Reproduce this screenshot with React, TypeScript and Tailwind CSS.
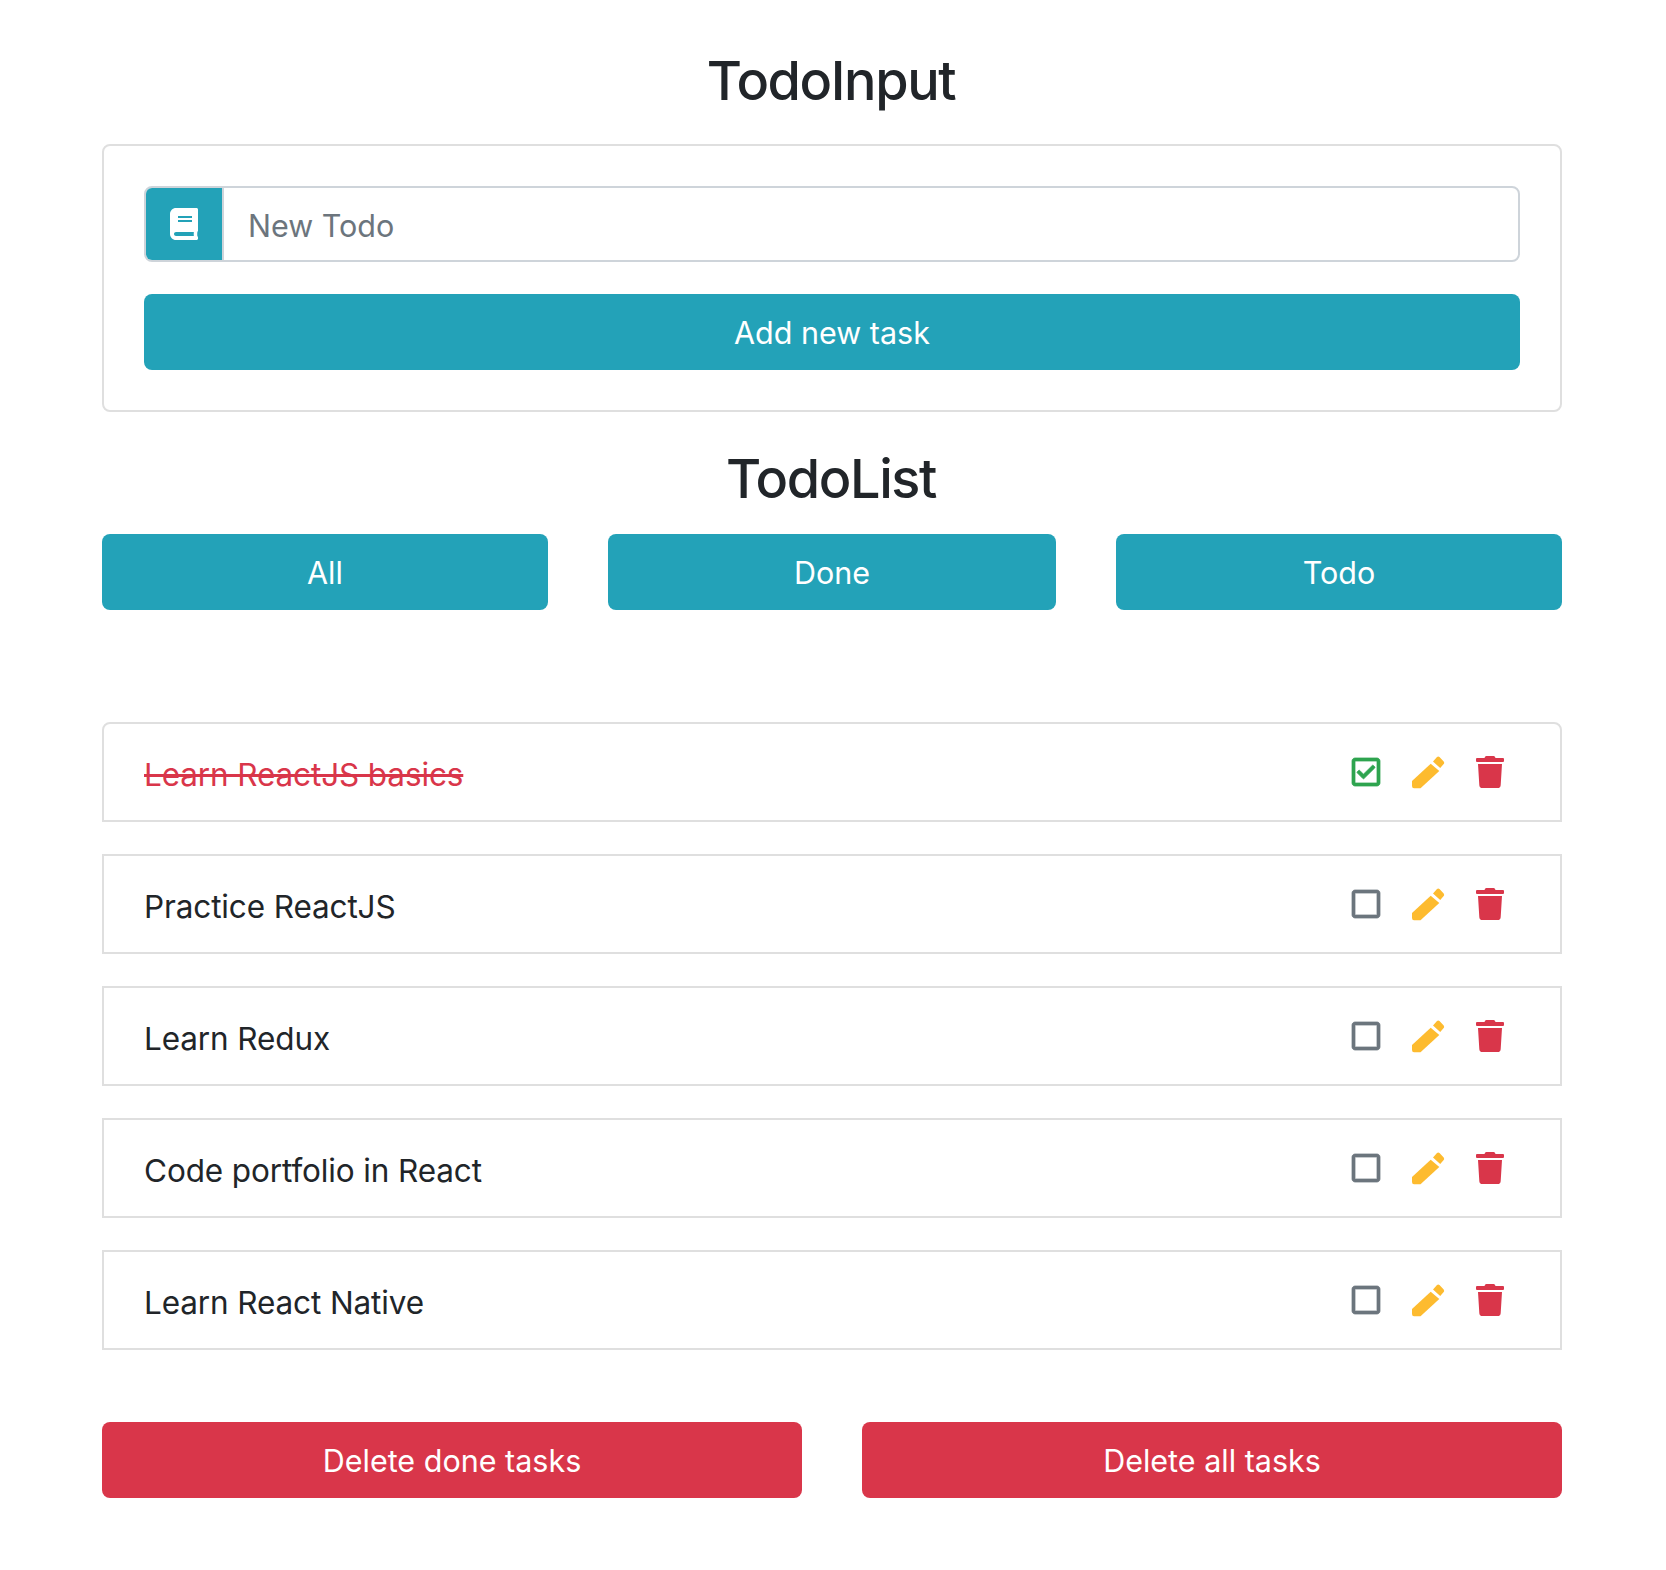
import { FaBook, FaRegCheckSquare, FaRegSquare, FaTrash } from "react-icons/fa";

const todos = [
  { text: "Learn ReactJS basics", done: true },
  { text: "Practice ReactJS", done: false },
  { text: "Learn Redux", done: false },
  { text: "Code portfolio in React", done: false },
  { text: "Learn React Native", done: false },
];

const btn = "h-[76px] rounded-lg pt-[2px] text-[30.5px] leading-[48px] font-normal tracking-normal text-white";

// solid pencil with one slit below the eraser
function PencilIcon() {
  return (
    <svg viewBox="0 0 33 33" className="ml-[32px] h-[33px] w-[33px] text-[#fdbb2f]" fill="currentColor">
      <path d="M18.7 7.7 27.3 15 8.5 32.2H2Q0 32.2 0 30V25Z" />
      <path d="M21 5.6 25 1Q26.2 0 27.5 1L31.7 5.5Q32.7 7 31.7 8L28.2 12Z" />
    </svg>
  );
}

function TodoRow({ text, done }: { text: string; done: boolean }) {
  return (
    <li className="flex h-[100px] items-center justify-between border-2 border-[#dfdfdf] pl-[40px] pr-[56px] first:rounded-t-lg">
      <span className={done ? "mt-[6px] text-[#d9364a] line-through" : "mt-[6px]"}>{text}</span>
      <div className="flex items-center">
        {done ? (
          <FaRegCheckSquare className="h-[32px] w-[28px] overflow-visible text-[#2ea44f]" stroke="currentColor" strokeWidth={12} />
        ) : (
          <FaRegSquare className="h-[32px] w-[28px] overflow-visible text-[#6c757d]" stroke="currentColor" strokeWidth={12} />
        )}
        <PencilIcon />
        <FaTrash className="ml-[31px] h-[32px] w-[28px] text-[#d9364a]" />
      </div>
    </li>
  );
}

export default function App() {
  return (
    <div className="min-h-[1570px] bg-white font-['Inter',sans-serif] text-[31.5px] leading-[48px] font-[430] tracking-[-0.12px] text-[#212529]">
      <div className="ml-[102px] w-[1460px] pt-[47px]">
        <h3 className="pr-[2px] text-center text-[54px] leading-[67px] font-medium tracking-[-1.4px]">TodoInput</h3>
        <div className="mt-[30px] rounded-lg border-2 border-[#dfdfdf] p-[40px]">
          <div className="flex h-[76px] overflow-hidden rounded-lg border-2 border-[#ced4da]">
            <div className="flex w-[78px] items-center justify-center border-r-2 border-[#ced4da] bg-[#23a2b8]">
              <FaBook className="h-[32px] w-[28px] text-white" />
            </div>
            <div className="flex items-center pl-[24px] pt-[3px] text-[30.5px] font-normal tracking-normal text-[#6c757d]">New Todo</div>
          </div>
          <button className={`${btn} mt-[32px] w-full bg-[#23a2b8]`}>Add new task</button>
        </div>
        <h3 className="mt-[33px] pr-[2px] text-center text-[54px] leading-[67px] font-medium tracking-[-1.4px]">TodoList</h3>
        <div className="mt-[22px] flex justify-between">
          <button className={`${btn} w-[446px] bg-[#23a2b8]`}>All</button>
          <button className={`${btn} w-[448px] bg-[#23a2b8]`}>Done</button>
          <button className={`${btn} w-[446px] bg-[#23a2b8]`}>Todo</button>
        </div>
        <ul className="mt-[112px] flex flex-col gap-[32px]">
          {todos.map((t) => (
            <TodoRow key={t.text} {...t} />
          ))}
        </ul>
        <div className="mt-[72px] flex justify-between">
          <button className={`${btn} w-[700px] bg-[#d9364a]`}>Delete done tasks</button>
          <button className={`${btn} w-[700px] bg-[#d9364a]`}>Delete all tasks</button>
        </div>
      </div>
    </div>
  );
}
